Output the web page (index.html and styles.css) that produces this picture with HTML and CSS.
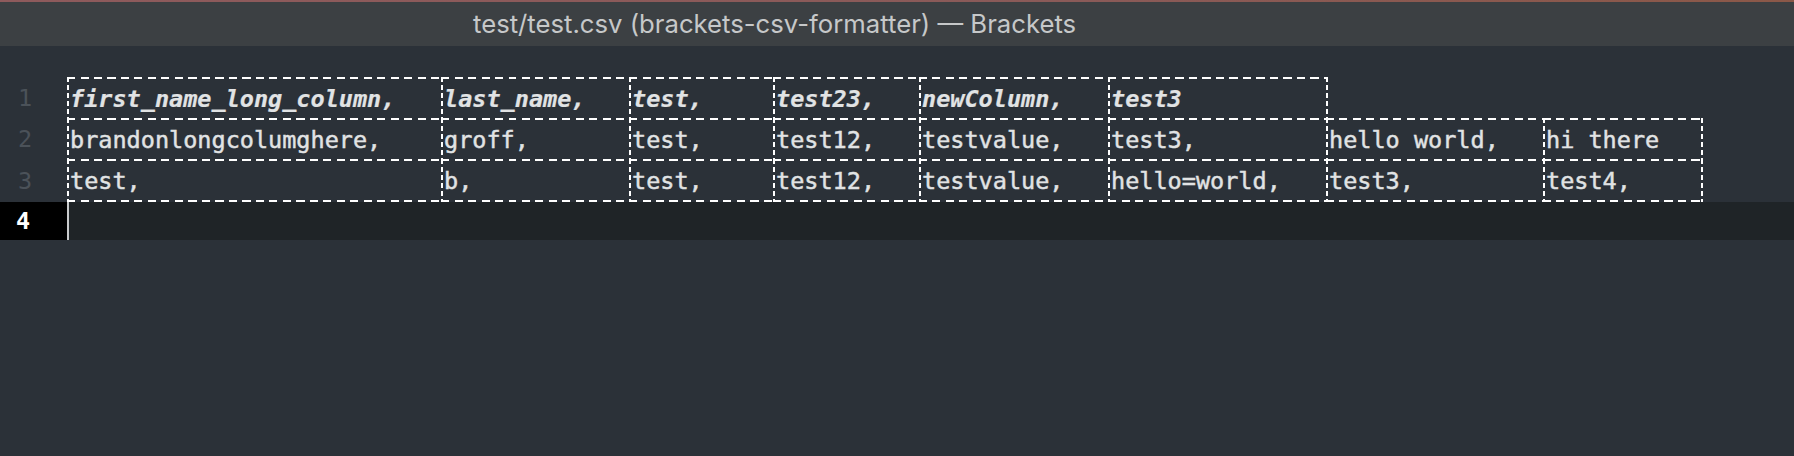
FILE: index.html
```html
<!DOCTYPE html>
<html>
<head>
<meta charset="utf-8">
<link rel="stylesheet" href="styles.css">
</head>
<body>
<div class="window">
  <div class="titlebar"><span class="title">test/test.csv (brackets-csv-formatter) — Brackets</span></div>
  <div class="editor">
    <div class="line">
      <div class="gutter">1</div>
      <div class="row head">
        <span class="cell c1">first_name_long_column,</span>
        <span class="cell c2">last_name,</span>
        <span class="cell c3">test,</span>
        <span class="cell c4">test23,</span>
        <span class="cell c5">newColumn,</span>
        <span class="cell c6 end">test3</span>
      </div>
    </div>
    <div class="line">
      <div class="gutter">2</div>
      <div class="row">
        <span class="cell c1">brandonlongcolumghere,</span>
        <span class="cell c2">groff,</span>
        <span class="cell c3">test,</span>
        <span class="cell c4">test12,</span>
        <span class="cell c5">testvalue,</span>
        <span class="cell c6">test3,</span>
        <span class="cell c7">hello world,</span>
        <span class="cell c8 end">hi there</span>
      </div>
    </div>
    <div class="line last">
      <div class="gutter">3</div>
      <div class="row">
        <span class="cell c1">test,</span>
        <span class="cell c2">b,</span>
        <span class="cell c3">test,</span>
        <span class="cell c4">test12,</span>
        <span class="cell c5">testvalue,</span>
        <span class="cell c6">hello=world,</span>
        <span class="cell c7">test3,</span>
        <span class="cell c8 end">test4,</span>
      </div>
    </div>
    <div class="line active">
      <div class="gutter">4</div>
      <div class="cursor"></div>
    </div>
  </div>
</div>
</body>
</html>
```
FILE: styles.css
```css
html, body {
  margin: 0;
  padding: 0;
  background: #2b3138;
}
.window {
  width: 1794px;
  height: 456px;
  background: #2b3138;
  overflow: hidden;
}
.titlebar {
  height: 44px;
  background: #3c4043;
  border-top: 2px solid;
  border-image: linear-gradient(to right, #8e5a5c, #8a5a58 60%, #8b5848) 1;
  display: flex;
  align-items: center;
  padding-left: 473px;
}
.title {
  font-family: Inter, "Liberation Sans", sans-serif;
  font-size: 25.7px;
  color: #c6c8c9;
  white-space: nowrap;
  padding-bottom: 1px;
}
.editor {
  padding-top: 31px;
  font-family: "DejaVu Sans Mono", "Liberation Mono", monospace;
  font-size: 23.5px;
  color: #e1e3e4;
}
.line {
  display: flex;
  height: 41px;
}
.line.last {
  height: 43px;
}
.gutter {
  width: 67px;
  flex: none;
  box-sizing: border-box;
  padding-left: 18px;
  color: #4b5259;
  display: flex;
  align-items: center;
}
.row {
  display: flex;
  align-items: stretch;
  -webkit-text-stroke: 0.45px #e1e3e4;
}
.cell {
  --hd: repeating-linear-gradient(to right, #ffffff 0 8px, transparent 8px 13.5px);
  --vd: repeating-linear-gradient(to bottom, #ffffff 0 5px, transparent 5px 8px);
  box-sizing: border-box;
  width: var(--w);
  flex: none;
  padding: 2px 0 0 3px;
  background-image: var(--hd), var(--vd);
  background-size: 100% 2px, 2px 100%;
  background-position: left top, left top;
  background-repeat: no-repeat;
  display: flex;
  align-items: center;
  white-space: pre;
}
.cell.end {
  width: calc(var(--w) + 2px);
  background-image: var(--hd), var(--vd), var(--vd);
  background-size: 100% 2px, 2px 100%, 2px 100%;
  background-position: left top, left top, right top;
}
.last .cell {
  padding-bottom: 2px;
  background-image: var(--hd), var(--vd), var(--hd);
  background-size: 100% 2px, 2px 100%, 100% 2px;
  background-position: left top, left top, left bottom;
}
.last .cell.end {
  background-image: var(--hd), var(--vd), var(--hd), var(--vd);
  background-size: 100% 2px, 2px 100%, 100% 2px, 2px 100%;
  background-position: left top, left top, left bottom, right top;
}
.head .cell {
  font-weight: bold;
  font-style: italic;
}
.head {
  -webkit-text-stroke: 0.2px #e1e3e4;
}
.c1 { --w: 374px; }
.c2 { --w: 188px; }
.c3 { --w: 144px; }
.c4 { --w: 146px; }
.c5 { --w: 189px; }
.c6 { --w: 218px; }
.c7 { --w: 217px; }
.c8 { --w: 158px; }
.line.active {
  height: 38px;
  background: #1f2427;
}
.active .gutter {
  background: #000000;
  color: #ffffff;
  font-weight: bold;
  padding-left: 16px;
}
.cursor {
  width: 2px;
  background: #c9cbcc;
}
```
